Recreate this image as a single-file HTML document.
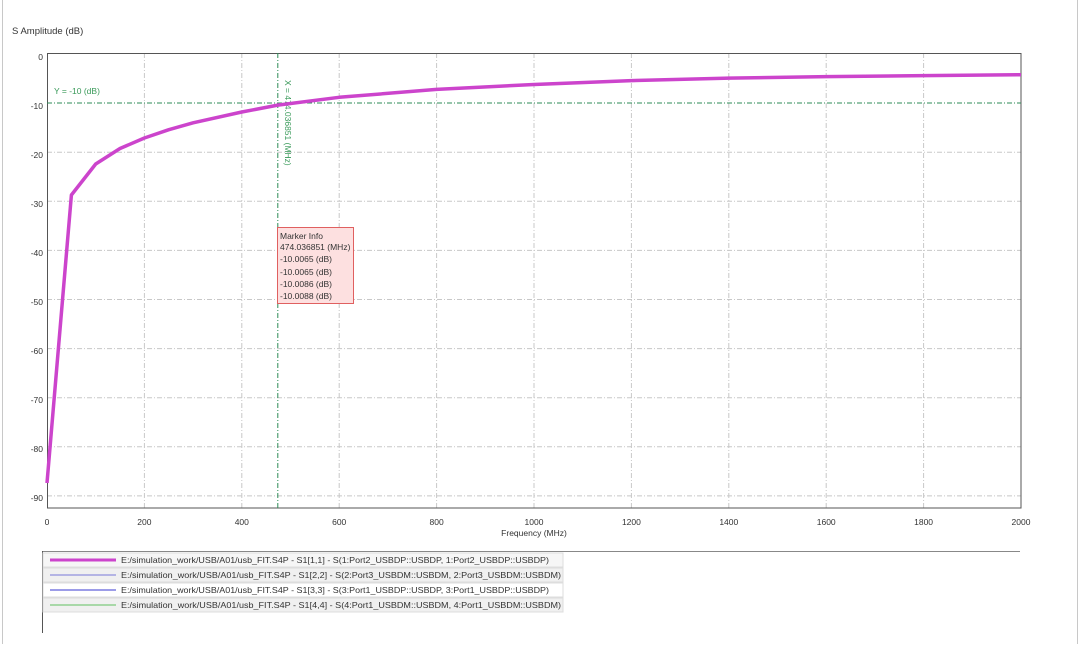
<!DOCTYPE html>
<html><head><meta charset="utf-8"><style>
body{margin:0;width:1080px;height:644px;background:#fff;overflow:hidden;font-family:"Liberation Sans",sans-serif}
</style></head><body>
<svg width="1080" height="644" xmlns="http://www.w3.org/2000/svg" font-family="Liberation Sans, sans-serif">
<line x1="2.5" y1="0" x2="2.5" y2="644" stroke="#c8c8c8"/>
<line x1="1077.5" y1="0" x2="1077.5" y2="644" stroke="#c8c8c8"/>
<text x="12" y="34" font-size="9.5" fill="#333">S Amplitude (dB)</text>
<g stroke="#c8c8c8" stroke-dasharray="5,2,1,2" stroke-width="1">
<line x1="47" y1="152.2" x2="1021" y2="152.2"/>
<line x1="47" y1="201.3" x2="1021" y2="201.3"/>
<line x1="47" y1="250.4" x2="1021" y2="250.4"/>
<line x1="47" y1="299.5" x2="1021" y2="299.5"/>
<line x1="47" y1="348.6" x2="1021" y2="348.6"/>
<line x1="47" y1="397.7" x2="1021" y2="397.7"/>
<line x1="47" y1="446.8" x2="1021" y2="446.8"/>
<line x1="47" y1="495.9" x2="1021" y2="495.9"/>
<line x1="144.4" y1="53" x2="144.4" y2="508"/>
<line x1="241.8" y1="53" x2="241.8" y2="508"/>
<line x1="339.2" y1="53" x2="339.2" y2="508"/>
<line x1="436.6" y1="53" x2="436.6" y2="508"/>
<line x1="534" y1="53" x2="534" y2="508"/>
<line x1="631.4" y1="53" x2="631.4" y2="508"/>
<line x1="728.8" y1="53" x2="728.8" y2="508"/>
<line x1="826.2" y1="53" x2="826.2" y2="508"/>
<line x1="923.6" y1="53" x2="923.6" y2="508"/>
</g>
<rect x="47.5" y="53.5" width="973.5" height="454.5" fill="none" stroke="#555"/>
<g stroke="#2e8b57" stroke-dasharray="5,2,1,2">
<line x1="47" y1="103" x2="1021" y2="103"/>
<line x1="277.8" y1="53" x2="277.8" y2="508"/>
</g>
<text x="54" y="94" font-size="8.5" fill="#3a9a5a">Y = -10 (dB)</text>
<text transform="translate(285,80) rotate(90)" font-size="8.5" fill="#3a9a5a">X = 474.036851 (MHz)</text>
<polyline fill="none" stroke="#cc44cc" stroke-width="3.5" stroke-linejoin="round" points="47,483 71.4,195 95.7,164 120,148.5 144.4,138 168.8,129.7 193.1,122.8 241.8,112 277.8,105.1 339.2,97.3 436.6,89.4 534,84.5 631.4,80.6 728.8,78.1 826.2,76.6 923.6,75.6 1021,74.7"/>
<rect x="277.5" y="227.5" width="76" height="76" fill="#fde0e0" stroke="#e06060"/>
<g font-size="8.5" fill="#333">
<text x="280" y="239">Marker Info</text>
<text x="280" y="250">474.036851 (MHz)</text>
<text x="280" y="262">-10.0065 (dB)</text>
<text x="280" y="275">-10.0065 (dB)</text>
<text x="280" y="287">-10.0086 (dB)</text>
<text x="280" y="299">-10.0088 (dB)</text>
</g>
<g font-size="8.5" fill="#333" text-anchor="end">
<text x="43" y="60">0</text><text x="43" y="109">-10</text><text x="43" y="158">-20</text>
<text x="43" y="207">-30</text><text x="43" y="256">-40</text><text x="43" y="305">-50</text>
<text x="43" y="354">-60</text><text x="43" y="403">-70</text><text x="43" y="452">-80</text>
<text x="43" y="501">-90</text>
</g>
<g font-size="8.5" fill="#333" text-anchor="middle">
<text x="47" y="525">0</text><text x="144.4" y="525">200</text><text x="241.8" y="525">400</text>
<text x="339.2" y="525">600</text><text x="436.6" y="525">800</text><text x="534" y="525">1000</text>
<text x="631.4" y="525">1200</text><text x="728.8" y="525">1400</text><text x="826.2" y="525">1600</text>
<text x="923.6" y="525">1800</text><text x="1021" y="525">2000</text>
<text x="534" y="536">Frequency (MHz)</text>
</g>
<line x1="42" y1="551.5" x2="1020" y2="551.5" stroke="#888"/>
<line x1="42.5" y1="551" x2="42.5" y2="633" stroke="#555"/>
<rect x="43" y="553" width="520" height="14" fill="#f6f6f6" stroke="#ddd"/>
<rect x="43" y="568" width="520" height="14" fill="#f0f0f0" stroke="#ddd"/>
<rect x="43" y="583" width="520" height="14" fill="#fff" stroke="#ddd"/>
<rect x="43" y="598" width="520" height="14" fill="#f0f0f0" stroke="#ddd"/>
<line x1="50" y1="560" x2="116" y2="560" stroke="#cc44cc" stroke-width="3"/>
<line x1="50" y1="575" x2="116" y2="575" stroke="#a0a0e0" stroke-width="1.5"/>
<line x1="50" y1="590" x2="116" y2="590" stroke="#3a3ad0" stroke-width="1"/>
<line x1="50" y1="605" x2="116" y2="605" stroke="#90d090" stroke-width="1.5"/>
<g font-size="8.5" fill="#333" lengthAdjust="spacingAndGlyphs">
<text x="121" y="563" textLength="428" lengthAdjust="spacingAndGlyphs">E:/simulation_work/USB/A01/usb_FIT.S4P - S1[1,1] - S(1:Port2_USBDP::USBDP, 1:Port2_USBDP::USBDP)</text>
<text x="121" y="578" textLength="440" lengthAdjust="spacingAndGlyphs">E:/simulation_work/USB/A01/usb_FIT.S4P - S1[2,2] - S(2:Port3_USBDM::USBDM, 2:Port3_USBDM::USBDM)</text>
<text x="121" y="593" textLength="428" lengthAdjust="spacingAndGlyphs">E:/simulation_work/USB/A01/usb_FIT.S4P - S1[3,3] - S(3:Port1_USBDP::USBDP, 3:Port1_USBDP::USBDP)</text>
<text x="121" y="608" textLength="440" lengthAdjust="spacingAndGlyphs">E:/simulation_work/USB/A01/usb_FIT.S4P - S1[4,4] - S(4:Port1_USBDM::USBDM, 4:Port1_USBDM::USBDM)</text>
</g>
</svg>
</body></html>
